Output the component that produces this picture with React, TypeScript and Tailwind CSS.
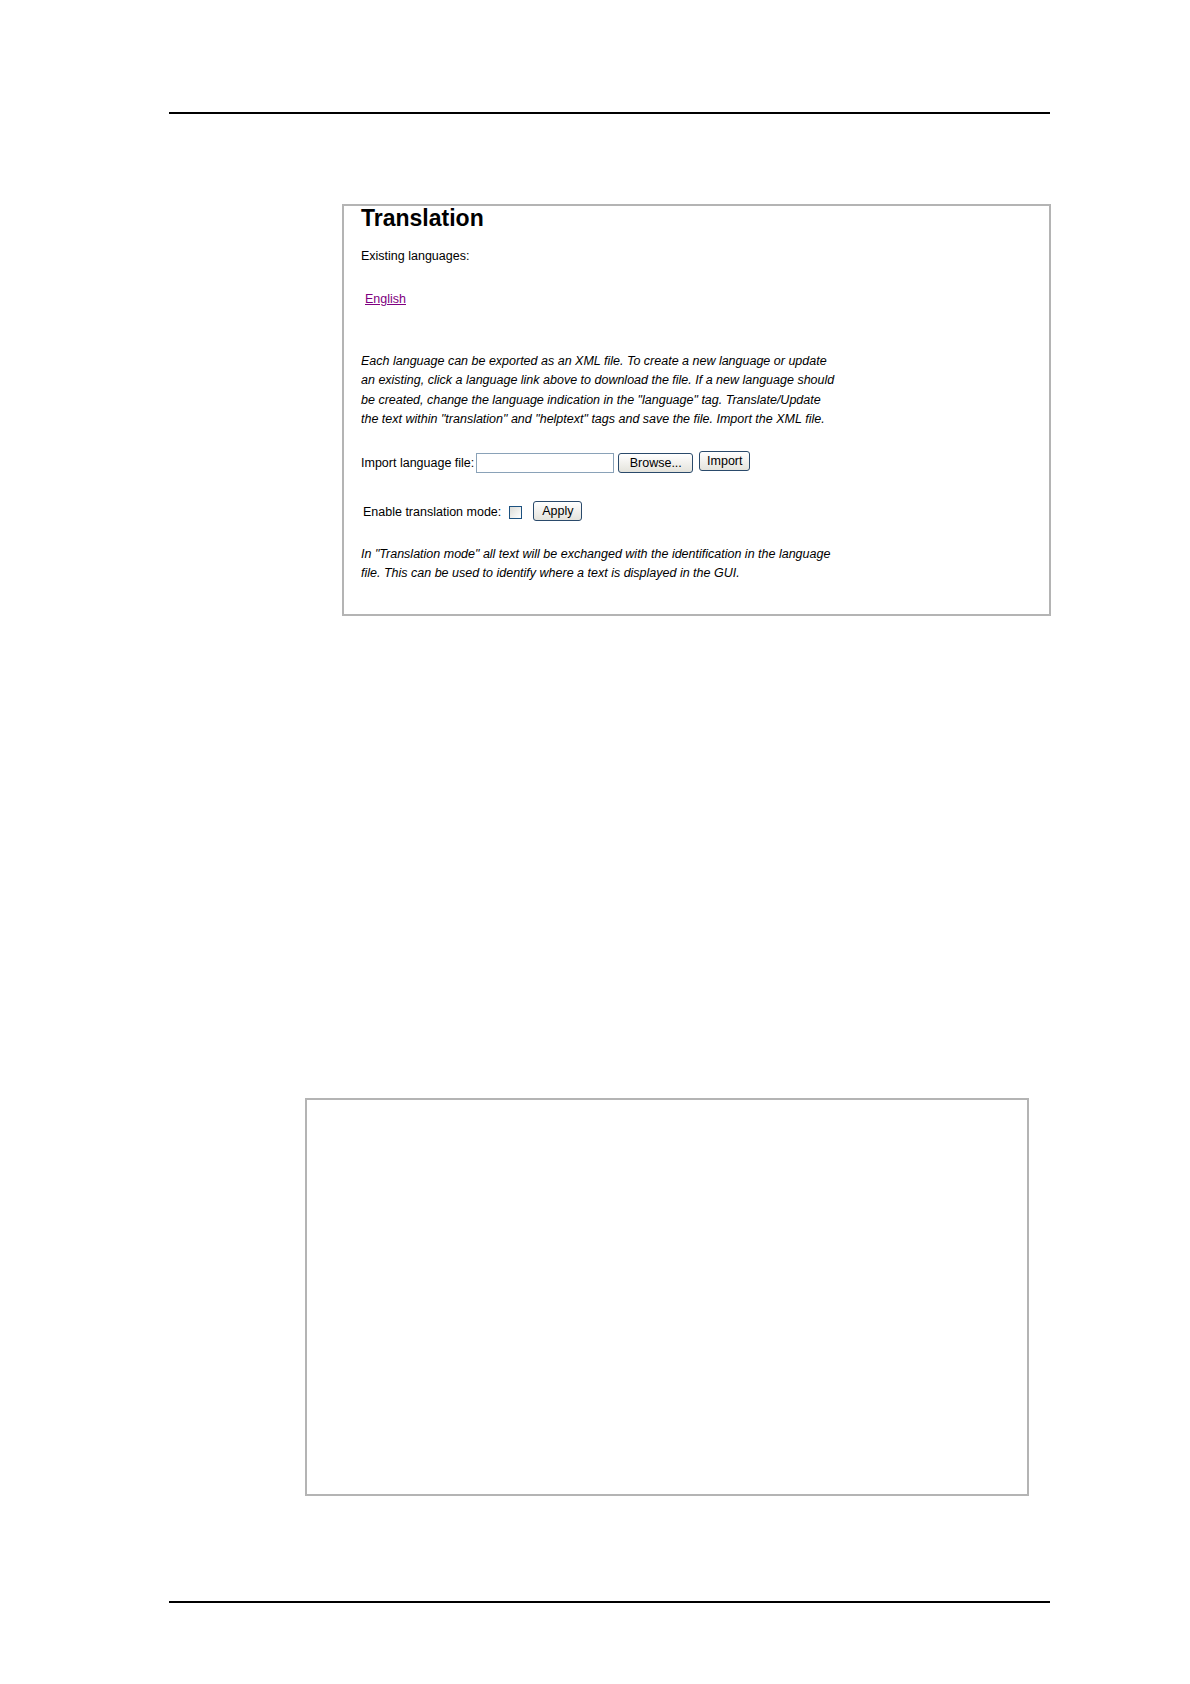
const sans = "font-['Liberation_Sans',Arial,sans-serif]";

function XpButton({ label, className = "" }: { label: string; className?: string }) {
  return (
    <button
      type="button"
      className={`h-[20px] rounded-[3px] border border-[#2a4a6b] bg-gradient-to-b from-[#ffffff] to-[#e4e3dc] px-[6px] text-[12.5px] leading-[16px] text-black ${className}`}
    >
      {label}
    </button>
  );
}

function TranslationPanel() {
  return (
    <div className={`ml-[173px] mt-[90px] h-[412px] w-[709px] border-2 border-[#b4b4b4] pl-[17px] text-black ${sans}`}>
      <h1 className="pt-[1px] text-[23px] font-bold leading-[23px]">Translation</h1>
      <p className="mt-[18px] text-[12.5px] leading-[16px]">Existing languages:</p>
      <a href="#" className="ml-[4px] mt-[27px] block w-fit text-[12.5px] leading-[16px] text-[#800080] underline">
        English
      </a>
      <p className="mt-[45px] text-[12.5px] italic leading-[19.3px]">
        Each language can be exported as an XML file. To create a new language or update
        <br />
        an existing, click a language link above to download the file. If a new language should
        <br />
        be created, change the language indication in the "language" tag. Translate/Update
        <br />
        the text within "translation" and "helptext" tags and save the file. Import the XML file.
      </p>
      <div className="mt-[24px] flex items-center text-[12.5px] leading-[16px]">
        <span>Import language file:</span>
        <input
          type="text"
          className="ml-[2px] h-[20px] w-[138px] border border-[#8aa2b8] bg-white"
        />
        <XpButton label="Browse..." className="ml-[4px] w-[75px]" />
        <XpButton label="Import" className="-mt-[4px] ml-[6px] w-[51px]" />
      </div>
      <div className="ml-[2px] mt-[30px] flex items-center text-[12.5px] leading-[16px]">
        <span>Enable translation mode:</span>
        <span className="ml-[8px] inline-block h-[13px] w-[13px] border border-[#1c5180] bg-gradient-to-br from-[#dcdcd7] to-[#ffffff]" />
        <XpButton label="Apply" className="-mt-[2px] ml-[11px] w-[49px]" />
      </div>
      <p className="mt-[24px] text-[12.5px] italic leading-[19.3px]">
        In "Translation mode" all text will be exchanged with the identification in the language
        <br />
        file. This can be used to identify where a text is displayed in the GUI.
      </p>
    </div>
  );
}

export default function App() {
  return (
    <div className="min-h-[1684px] w-[1190px] bg-white">
      <div className="w-[1050px] pl-[169px] pt-[112px]">
        <div className="h-[2px] bg-black" />
        <TranslationPanel />
        <div className="ml-[136px] mt-[482px] h-[398px] w-[724px] border-2 border-[#b4b4b4]" />
        <div className="mt-[105px] h-[2px] bg-black" />
      </div>
    </div>
  );
}
